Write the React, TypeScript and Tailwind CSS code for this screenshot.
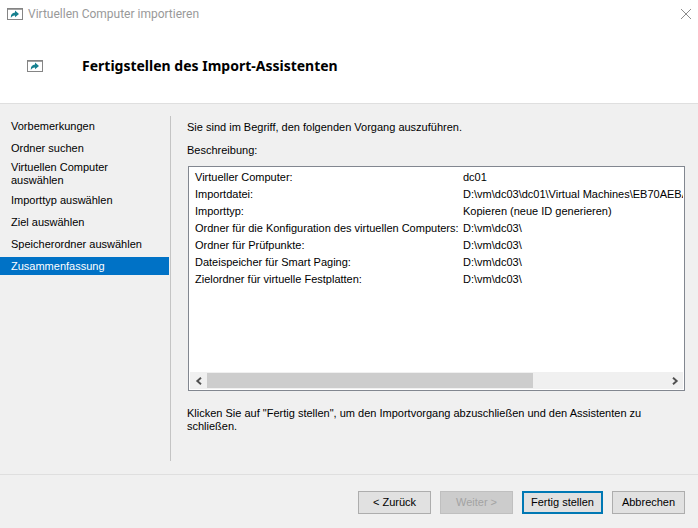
import clsx from "clsx";

const steps = [
  "Vorbemerkungen",
  "Ordner suchen",
  "Virtuellen Computer auswählen",
  "Importtyp auswählen",
  "Ziel auswählen",
  "Speicherordner auswählen",
  "Zusammenfassung",
];

const summary = [
  { label: "Virtueller Computer:", value: "dc01" },
  { label: "Importdatei:", value: "D:\\vm\\dc03\\dc01\\Virtual Machines\\EB70AEBA" },
  { label: "Importtyp:", value: "Kopieren (neue ID generieren)" },
  { label: "Ordner für die Konfiguration des virtuellen Computers:", value: "D:\\vm\\dc03\\" },
  { label: "Ordner für Prüfpunkte:", value: "D:\\vm\\dc03\\" },
  { label: "Dateispeicher für Smart Paging:", value: "D:\\vm\\dc03\\" },
  { label: "Zielordner für virtuelle Festplatten:", value: "D:\\vm\\dc03\\" },
];

const ImportIcon = () => (
  <svg width="16" height="12" viewBox="0 0 16 12" className="shrink-0" aria-hidden="true">
    <rect x="0.5" y="0.5" width="15" height="11" fill="#fff" stroke="#858585" />
    <path d="M0 1h16" stroke="#858585" strokeWidth="1.5" />
    <path d="M3.8 10C3.6 6.5 5.3 4.7 8 4.6V2.6L12 6L8 9.2V7.4C6 7.3 4.8 8.2 3.8 10z" fill="#16808f" />
  </svg>
);

const Chevron = ({ flip }: { flip?: boolean }) => (
  <svg width="8" height="8" viewBox="0 0 8 8" className={clsx(flip && "rotate-180")} aria-hidden="true">
    <path d="M6 0.7L2.3 4l3.7 3.3" fill="none" stroke="#505050" strokeWidth="1.9" />
  </svg>
);

const buttonBase = "h-[23px] text-center";

export default function App() {
  return (
    <div className="flex min-h-screen flex-col bg-[#f0f0f0] font-['Liberation_Sans',sans-serif] text-[11px] leading-[13px] text-black">
      <header className="border-b border-[#dfdfdf] bg-white">
        <div className="flex h-7 items-center gap-[5px] pl-[7px] pr-[6px]">
          <ImportIcon />
          <span className="font-['Roboto',sans-serif] text-[12px] leading-4 text-[#999]">
            Virtuellen Computer importieren
          </span>
          <button type="button" aria-label="Schließen" className="ml-auto">
            <svg width="12" height="12" viewBox="0 0 12 12" aria-hidden="true">
              <path d="M1 1l10 10M11 1L1 11" stroke="#8c8c8c" strokeWidth="1" />
            </svg>
          </button>
        </div>
        <div className="flex h-[75px] items-center gap-[39px] pl-[27px]">
          <ImportIcon />
          <h1 className="font-['Noto_Sans',sans-serif] text-[14px] font-bold leading-4">
            Fertigstellen des Import-Assistenten
          </h1>
        </div>
      </header>

      <div className="flex flex-1 pb-[13px] pt-3">
        <nav className="w-[170px] shrink-0 pr-px">
          <ol className="flex flex-col gap-1 pt-px">
            {steps.map((step, i) => (
              <li
                key={step}
                className={clsx(
                  "flex min-h-[18px] items-center pl-[11px] pr-4",
                  i === steps.length - 1 && "bg-[#0072c6] text-white"
                )}
                aria-current={i === steps.length - 1 ? "step" : undefined}
              >
                {step}
              </li>
            ))}
          </ol>
        </nav>

        <main className="flex min-w-0 flex-1 flex-col border-l border-[#c4c4c4] pl-4 pr-[13px] pt-[5px]">
          <p>Sie sind im Begriff, den folgenden Vorgang auszuführen.</p>
          <p className="mt-[10px]">Beschreibung:</p>

          <div className="ml-px mt-[9px] flex h-[225px] flex-col border border-[#828790] bg-white p-px">
            <div className="flex-1 overflow-hidden pt-px">
              <table className="w-full table-fixed whitespace-nowrap text-left">
                <tbody>
                  {summary.map((row) => (
                    <tr key={row.label} className="h-[17px]">
                      <th scope="row" className="w-[273px] p-0 pl-[5px] font-normal">
                        {row.label}
                      </th>
                      <td className="p-0">{row.value}</td>
                    </tr>
                  ))}
                </tbody>
              </table>
            </div>
            <div className="flex h-[17px] items-center bg-[#f0f0f0]">
              <button type="button" aria-label="Nach links" className="flex w-[17px] justify-center">
                <Chevron />
              </button>
              <div className="h-[15px] flex-1">
                <div className="h-full w-[71%] bg-[#cdcdcd]" />
              </div>
              <button type="button" aria-label="Nach rechts" className="flex w-[17px] justify-center">
                <Chevron flip />
              </button>
            </div>
          </div>

          <p className="mt-4">
            Klicken Sie auf "Fertig stellen", um den Importvorgang abzuschließen und den Assistenten zu schließen.
          </p>
        </main>
      </div>

      <footer className="flex justify-end gap-[9px] border-t border-[#dfdfdf] pb-[14px] pr-[13px] pt-4">
        <button type="button" className={clsx(buttonBase, "w-[73px] border border-[#adadad] bg-[#e1e1e1]")}>
          &lt; Zurück
        </button>
        <button
          type="button"
          disabled
          className={clsx(buttonBase, "w-[73px] border border-[#bfbfbf] bg-[#cccccc] text-[#a3a3a3]")}
        >
          Weiter &gt;
        </button>
        <button type="button" className={clsx(buttonBase, "w-[81px] border-2 border-[#0078b4] bg-[#e1e1e1]")}>
          Fertig stellen
        </button>
        <button type="button" className={clsx(buttonBase, "w-[73px] border border-[#adadad] bg-[#e1e1e1]")}>
          Abbrechen
        </button>
      </footer>
    </div>
  );
}
